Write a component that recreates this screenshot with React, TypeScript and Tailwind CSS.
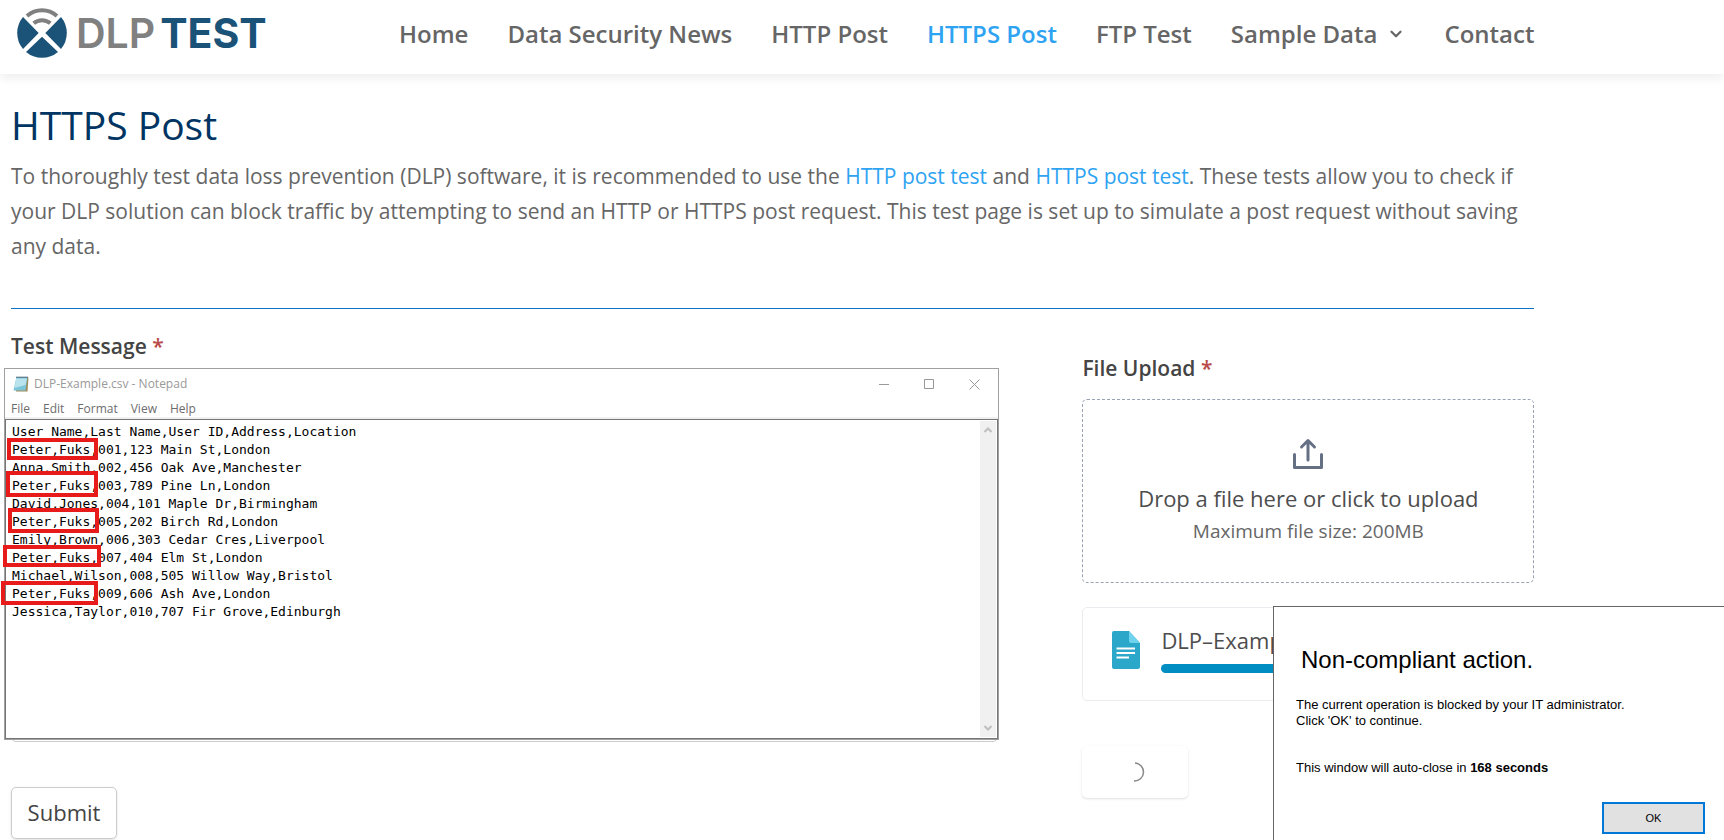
import { ChevronDown } from 'lucide-react';

const navItems = [
  { label: 'Home' },
  { label: 'Data Security News' },
  { label: 'HTTP Post' },
  { label: 'HTTPS Post', active: true },
  { label: 'FTP Test' },
  { label: 'Sample Data', hasMenu: true },
  { label: 'Contact' },
];

const menuItems = ['File', 'Edit', 'Format', 'View', 'Help'];

const csv = `User Name,Last Name,User ID,Address,Location
Peter,Fuks,001,123 Main St,London
Anna,Smith,002,456 Oak Ave,Manchester
Peter,Fuks,003,789 Pine Ln,London
David,Jones,004,101 Maple Dr,Birmingham
Peter,Fuks,005,202 Birch Rd,London
Emily,Brown,006,303 Cedar Cres,Liverpool
Peter,Fuks,007,404 Elm St,London
Michael,Wilson,008,505 Willow Way,Bristol
Peter,Fuks,009,606 Ash Ave,London
Jessica,Taylor,010,707 Fir Grove,Edinburgh`;

// hand-placed markers over the repeated name
const markers = [
  'left-[2px] top-[69px] w-[91px] h-[22px]',
  'left-[1px] top-[102px] w-[92px] h-[26px]',
  'left-[3px] top-[139px] w-[91px] h-[25px]',
  '-left-[2px] top-[176px] w-[98px] h-[22px]',
  '-left-[4px] top-[212px] w-[97px] h-[24px]',
];

function Logo() {
  return (
    <a href="#" className="flex items-center gap-[9px]">
      <svg viewBox="0 0 150 150" className="size-[50px]">
        <g fill="#1b5277">
          <path d="M18 27 L65 75 L18 123 A75 75 0 0 1 18 27Z" />
          <path d="M132 27 L85 75 L132 123 A75 75 0 0 0 132 27Z" />
          <path d="M75 86 L123 132 A75 75 0 0 1 27 132Z" />
        </g>
        <g fill="none" stroke="#808080" strokeWidth="12">
          <path d="M30 24 A68 68 0 0 1 120 24" />
          <path d="M50 46 A38 38 0 0 1 100 46" />
        </g>
      </svg>
      <span className="flex gap-[5px] font-['Inter',sans-serif] text-[41px] leading-[50px]">
        <span className="font-semibold text-[#808080]">DLP</span>
        <span className="font-bold text-[#1b5277]">TEST</span>
      </span>
    </a>
  );
}

function NotepadIcon() {
  return (
    <svg viewBox="0 0 16 16" className="size-4">
      <path d="M4.500 1.500h11l-1 14H3z" fill="#a08c5a" />
      <path d="M3.500 1h11l-2 13.500H0.500z" fill="#7cc4d8" />
      <path d="M3.300 2.500h10.500L12.500 9l-11 3z" fill="#b9e4ee" />
      <path d="M3.500 1.200h11.500" stroke="#345" strokeWidth="1.500" strokeDasharray="1 1" />
    </svg>
  );
}

function Notepad() {
  return (
    <div className="absolute -left-[7px] -right-[1px] top-0 flex h-[372px] flex-col border border-[#a0a0a0] bg-white font-['Open_Sans',sans-serif] text-xs">
      <div className="flex h-[30px] items-center pl-2 pr-[18px] text-[#999]">
        <NotepadIcon />
        <span className="ml-[5px] flex-1">DLP-Example.csv - Notepad</span>
        <div className="flex gap-[34px]">
          <button aria-label="Minimize">
            <svg viewBox="0 0 11 11" className="size-[11px]" stroke="#999"><path d="M0 5.500h10" /></svg>
          </button>
          <button aria-label="Maximize">
            <svg viewBox="0 0 11 11" className="size-[11px]" stroke="#999" fill="none"><path d="M.5 .5h9v9h-9z" /></svg>
          </button>
          <button aria-label="Close">
            <svg viewBox="0 0 11 11" className="size-[11px]" stroke="#999"><path d="M.5 .5l10 10M10.500 .5l-10 10" /></svg>
          </button>
        </div>
      </div>
      <div className="flex h-5 items-end gap-[13px] border-b-2 border-[#f0f0f0] pl-[6px] leading-4 text-[#6d6d6d]">
        {menuItems.map((item) => (
          <button key={item}>{item}</button>
        ))}
      </div>
      <div className="flex flex-1 border border-[#767676] p-px">
        <textarea
          aria-label="DLP-Example.csv"
          readOnly
          wrap="off"
          defaultValue={csv}
          className="flex-1 resize-none overflow-hidden pl-[5px] pt-[2px] font-['DejaVu_Sans_Mono',monospace] text-[13px] leading-[18px] text-black outline-none"
        />
        <div className="flex w-4 flex-col items-center justify-between bg-[#f0f0f0] py-[6px]">
          <svg viewBox="0 0 8 6" className="h-[6px] w-2" fill="none" stroke="#bfbfbf" strokeWidth="2"><path d="M.5 5L4 1.500L7.500 5" /></svg>
          <svg viewBox="0 0 8 6" className="h-[6px] w-2" fill="none" stroke="#bfbfbf" strokeWidth="2"><path d="M.5 1L4 4.500L7.500 1" /></svg>
        </div>
      </div>
      {markers.map((pos) => (
        <span key={pos} className={`absolute border-4 border-[#e81b1b] ${pos}`} />
      ))}
    </div>
  );
}

function FileIcon() {
  return (
    <svg viewBox="0 0 28 38" className="h-[38px] w-7">
      <path d="M2 0h15l11 12v24a2 2 0 0 1-2 2H2a2 2 0 0 1-2-2V2a2 2 0 0 1 2-2z" fill="#2aa7c9" />
      <path d="M17 0l11 12H19a2 2 0 0 1-2-2z" fill="#6fd3ee" />
      <path d="M4.500 17.500h18.500M4.500 22h18.500M4.500 26.500h12.500" stroke="#fff" strokeWidth="2.200" />
    </svg>
  );
}

function UploadPanel() {
  return (
    <div className="w-[452px] shrink-0 pt-[22px] font-['Open_Sans',sans-serif] text-[#4d4d4d]">
      <label htmlFor="upload" className="block text-[21px] font-semibold leading-[30px] text-[#444]">
        File Upload <span className="text-[#b94a48]">*</span>
      </label>
      <input id="upload" type="file" className="sr-only" />
      <label
        htmlFor="upload"
        className="mt-4 flex h-[184px] flex-col items-center rounded-[5px] border border-dashed border-[#98a2b3] pt-[38px]"
      >
        <svg viewBox="0 0 32 32" className="size-8" fill="none" stroke="#667085" strokeWidth="3" strokeLinecap="round" strokeLinejoin="round">
          <path d="M2.500 16.500v13h27v-13" />
          <path d="M16 22V3M9.500 9L16 2.500L22.500 9" />
        </svg>
        <span className="mt-[11px] text-[22px] leading-[34px]">Drop a file here or click to upload</span>
        <span className="text-[19px] leading-[32px] text-[#666]">Maximum file size: 200MB</span>
      </label>

      <div className="mt-6 flex h-[94px] gap-[21px] rounded-[5px] border border-[#eaecf0] pl-[29px] pr-6 pt-[23px]">
        <FileIcon />
        <div className="-mt-2 flex-1">
          <div className="text-[22px] leading-[34px]">DLP–Example.csv</div>
          <progress
            aria-label="Upload progress"
            value={100}
            max={100}
            className="mt-[7px] block h-[9px] w-full appearance-none overflow-hidden rounded-full [&::-webkit-progress-bar]:bg-[#eaecf0] [&::-webkit-progress-value]:bg-[#008ec2]"
          />
        </div>
      </div>

      <button aria-label="Loading" className="mt-[45px] flex h-[52px] w-[106px] items-center justify-center rounded-[5px] shadow-sm">
        <svg viewBox="0 0 20 20" className="size-5" fill="none" stroke="#888" strokeWidth="1.500">
          <path d="M10 1A9 9 0 0 1 9 19" />
        </svg>
      </button>
    </div>
  );
}

function BlockDialog() {
  return (
    <div
      role="alertdialog"
      aria-labelledby="block-title"
      className="fixed bottom-0 right-0 flex h-[234px] w-[451px] flex-col border-l border-t border-[#666] bg-white pl-[22px] font-['Liberation_Sans',Arial,sans-serif] text-[13px] leading-4 text-black"
    >
      <h2 id="block-title" className="ml-[5px] mt-[39px] text-[24px] leading-7">Non-compliant action.</h2>
      <p className="mt-[23px]">
        The current operation is blocked by your IT administrator.
        <br />
        Click 'OK' to continue.
      </p>
      <p className="mt-[31px]">
        This window will auto-close in <b>168 seconds</b>
      </p>
      <button className="mt-[26px] mr-[19px] h-8 w-[103px] self-end border-2 border-[#0078d7] bg-[#e1e1e1] text-[11px]">OK</button>
    </div>
  );
}

export default function App() {
  return (
    <div className="min-h-screen overflow-hidden bg-white font-['Open_Sans',sans-serif] text-[#666]">
      <header className="flex h-[74px] items-start justify-between pl-[17px] pr-[11%] pt-2 shadow-[0_4px_10px_rgba(0,0,0,0.07)]">
        <Logo />
        <nav className="flex gap-[39px] pt-[10px] text-[24px] font-semibold leading-8">
          {navItems.map(({ label, active, hasMenu }) => (
            <a key={label} href="#" className={active ? 'text-[#2ea3f2]' : 'flex items-center gap-[10px]'}>
              {label}
              {hasMenu && <ChevronDown className="size-[18px]" strokeWidth={3} />}
            </a>
          ))}
        </nav>
      </header>

      <main className="pl-[11px] pr-[11%] pt-[27px]">
        <h1 className="text-[39px] leading-[48px] text-[#003462]">HTTPS Post</h1>
        <p className="mt-[10px] text-[21px] leading-[35px]">
          To thoroughly test data loss prevention (DLP) software, it is recommended to use the{' '}
          <a href="#" className="text-[#2ea3f2]">HTTP post test</a> and{' '}
          <a href="#" className="text-[#2ea3f2]">HTTPS post test</a>. These tests allow you to check if your DLP
          solution can block traffic by attempting to send an HTTP or HTTPS post request. This test page is set up to
          simulate a post request without saving any data.
        </p>
        <hr className="mt-11 border-[#0c71c3]" />

        <form className="flex gap-[84px] pt-[22px]" onSubmit={(e) => e.preventDefault()}>
          <div className="flex-1">
            <label htmlFor="message" className="block text-[21px] font-semibold leading-[30px] text-[#444]">
              Test Message <span className="text-[#b94a48]">*</span>
            </label>
            <div className="relative mt-[7px]">
              <textarea id="message" className="block h-[374px] w-full resize-none rounded-[5px] border border-[#ccc]" />
              <Notepad />
            </div>
            <button className="mt-[45px] h-[52px] w-[106px] rounded-[5px] border border-[#ccc] pb-[2px] text-[22px] text-[#444] shadow-sm">
              Submit
            </button>
          </div>
          <UploadPanel />
        </form>
      </main>

      <BlockDialog />
    </div>
  );
}
